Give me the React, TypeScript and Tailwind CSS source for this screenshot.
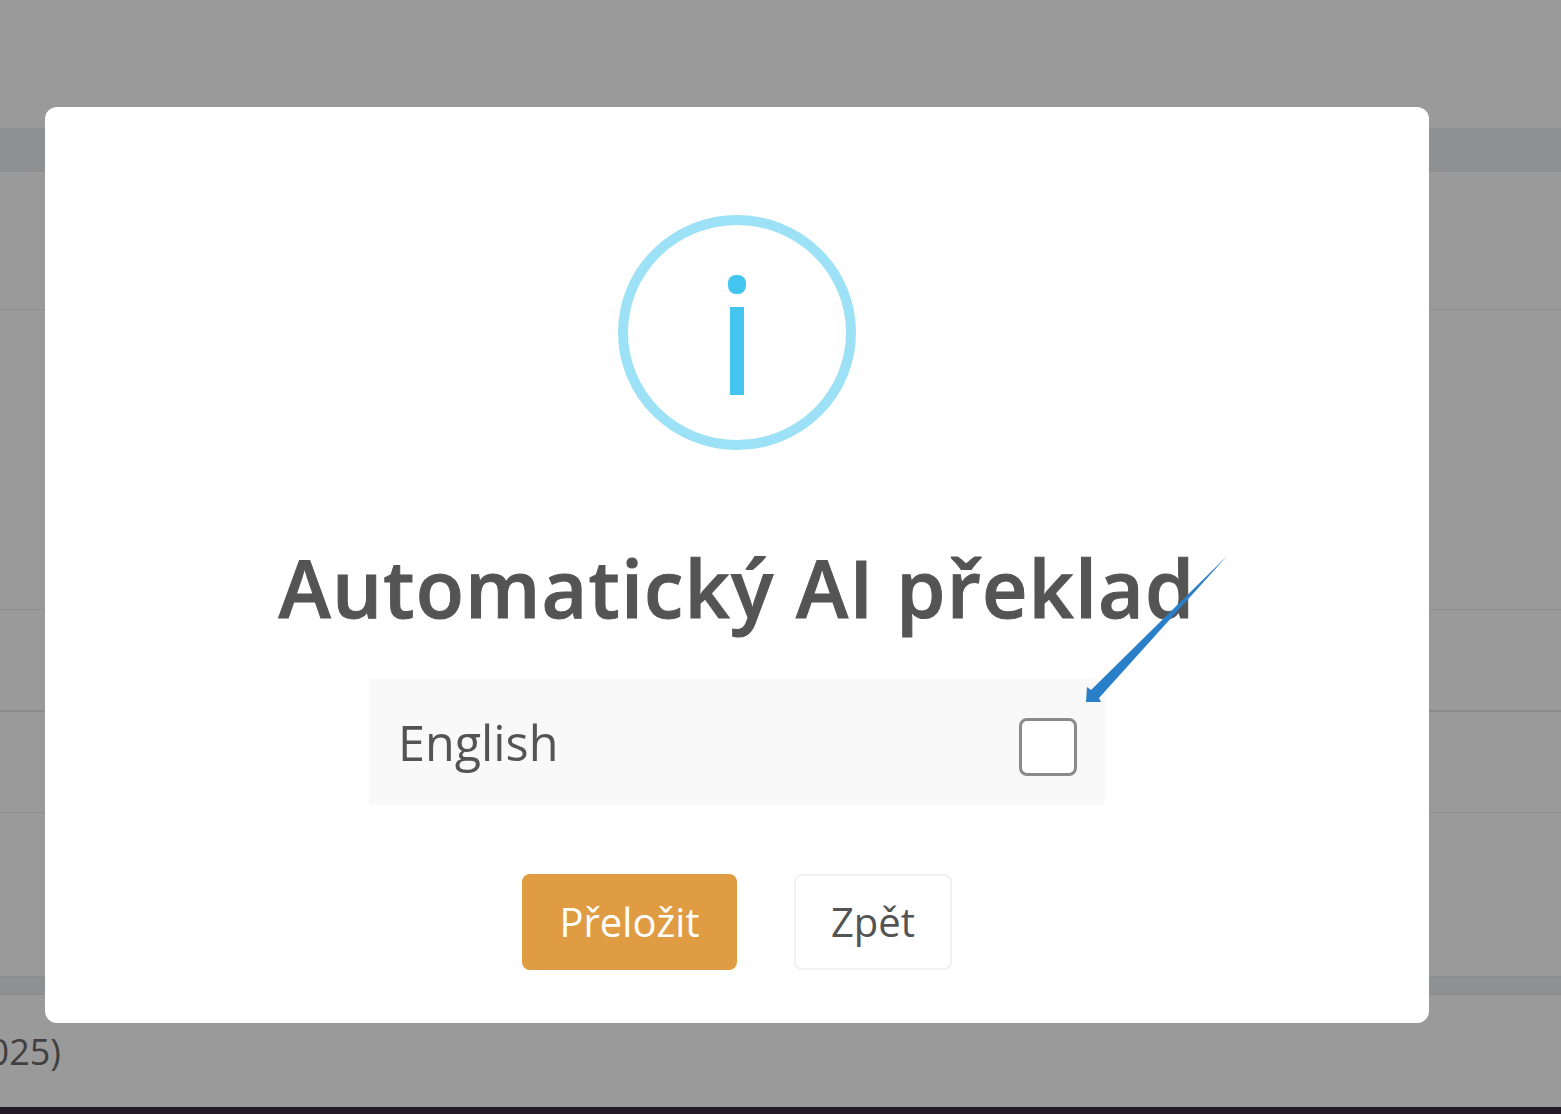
export default function App() {
  const font = { fontFamily: '"Open Sans", sans-serif' };

  return (
    <div className="relative h-[1114px] w-full overflow-hidden bg-[#9a9a9a]" style={font}>
      {/* Dimmed page behind the dialog */}
      <div className="flex h-full flex-col">
        <div className="h-[128px]" />
        <div className="h-[44px] border-b border-[#8b8b8b] bg-[#8e9092]" />
        <div className="h-[138px] border-b border-[#8e8e8e]" />
        <div className="h-[300px] border-b border-[#8e8e8e]" />
        <div className="h-[102px] border-b-2 border-[#8b8b8b]" />
        <div className="h-[101px] border-b border-[#8e8e8e]" />
        <div className="h-[164px] border-b border-[#8b8b8b]" />
        <div className="h-[18px] border-b border-[#8b8b8b] bg-[#8e9092]" />
        <div className="flex-1 pt-[34px]">
          <div className="-ml-[32px] text-[36px] leading-[46px] text-[#404040]">2025)</div>
        </div>
        <div className="h-[7px] bg-[#231825]" />
      </div>

      {/* Dialog */}
      <div className="absolute left-[45px] top-[107px] flex h-[916px] w-[1384px] flex-col items-center rounded-[12px] bg-white pt-[108px]">
        <svg width="238" height="236" viewBox="0 0 238 236" className="shrink-0">
          <ellipse cx="119" cy="117.5" rx="114" ry="112.5" fill="none" stroke="#9ce1f6" strokeWidth="10" />
          <rect x="110" y="60" width="18" height="19" rx="8" fill="#43c5f0" />
          <rect x="112" y="92" width="14" height="88" fill="#43c5f0" />
        </svg>

        <h2 className="mt-[88px] text-[79px] font-semibold leading-[98px] tracking-[1.15px] text-[#545454] [-webkit-text-stroke:1px_#545454]">
          Automatický AI překlad
        </h2>

        <div className="mt-[42px] flex h-[126px] w-[736px] items-center justify-between bg-[#f9f9f9] pl-[29px] pr-[28px]">
          <span className="text-[48.5px] leading-[62px] text-[#545454]">English</span>
          <span className="mt-[10px] h-[58px] w-[58px] rounded-[8px] border-[3px] border-[#8a8a8a] bg-white" />
        </div>

        <div className="mt-[69px] flex gap-[57px]">
          <button className="flex h-[96px] w-[215px] items-center justify-center rounded-[8px] bg-[#e09c42] text-[40px] font-medium text-white">
            Přeložit
          </button>
          <button className="flex h-[96px] w-[158px] items-center justify-center rounded-[8px] border-2 border-[#f1f1f1] bg-white text-[40px] text-[#545454]">
            Zpět
          </button>
        </div>
      </div>

      {/* Annotation arrow */}
      <svg width="1561" height="1114" viewBox="0 0 1561 1114" className="pointer-events-none absolute left-0 top-0">
        <polygon
          points="1227,556 1099,698 1101,702 1086,702 1087,687 1091,690"
          fill="#2a7fc9"
        />
      </svg>
    </div>
  );
}
